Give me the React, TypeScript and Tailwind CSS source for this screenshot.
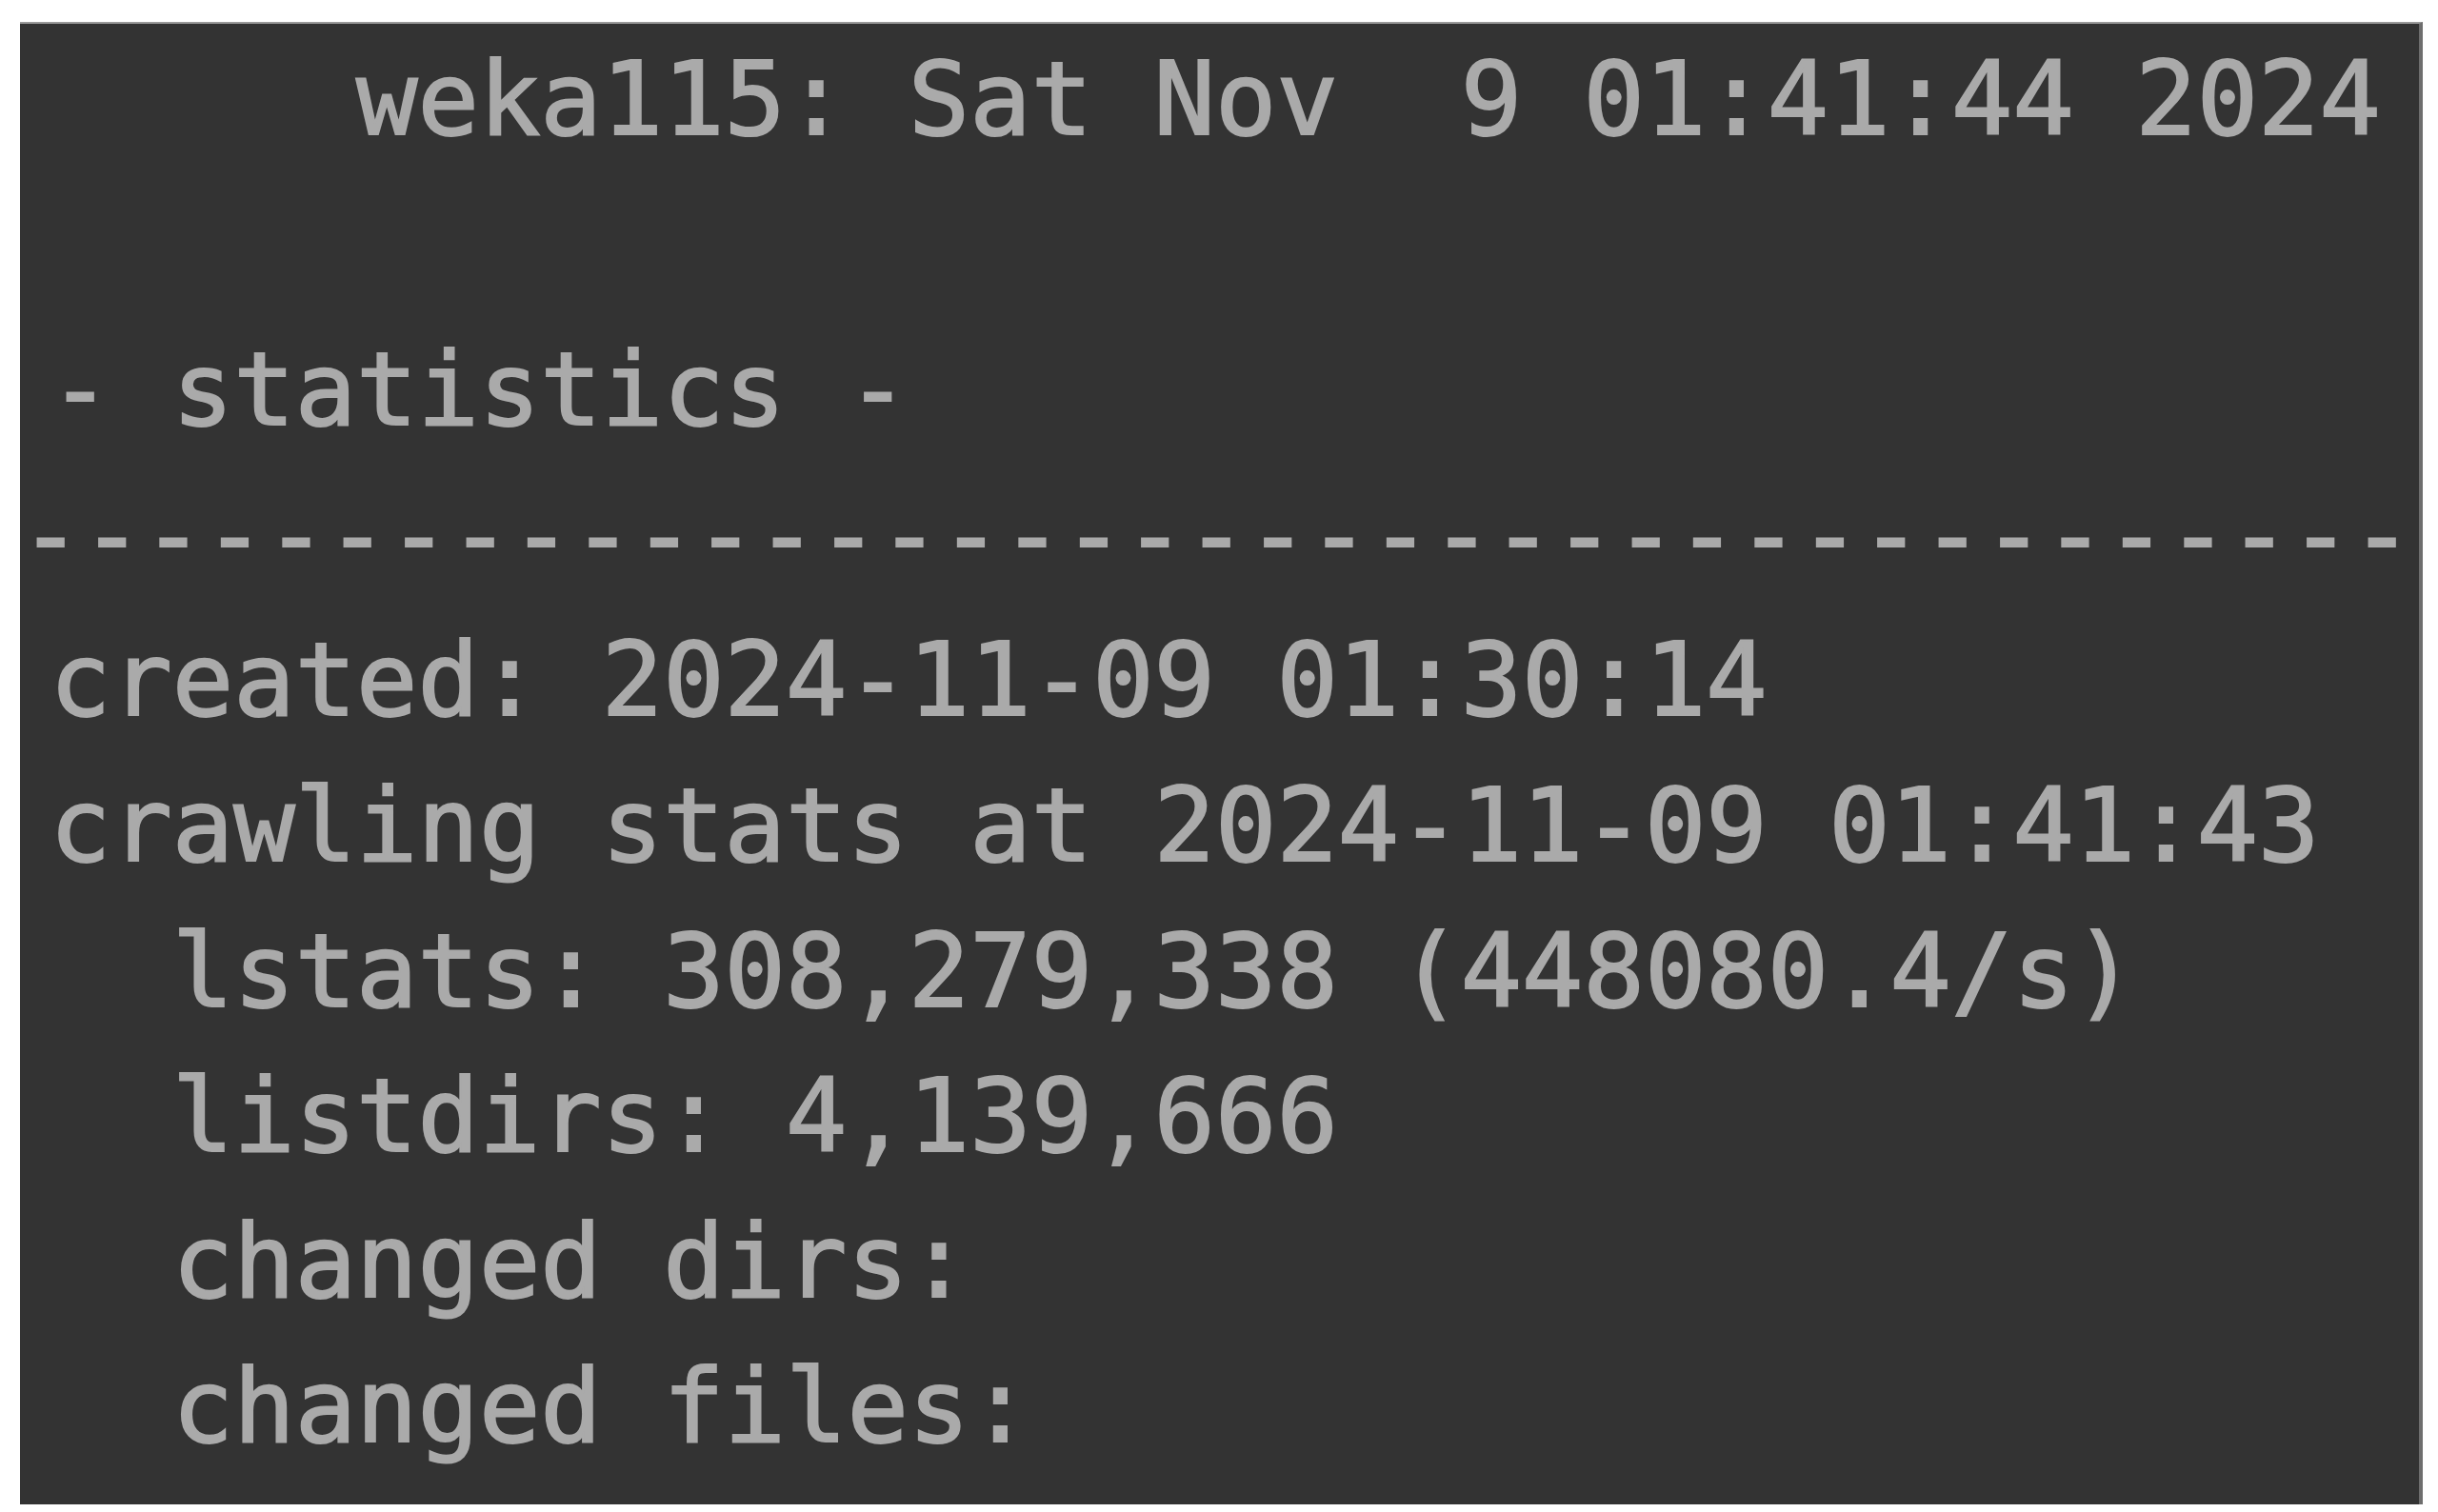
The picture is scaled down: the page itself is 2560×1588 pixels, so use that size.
const lines: string[] = [
  "     weka115: Sat Nov  9 01:41:44 2024",
  "",
  "- statistics -",
];

const stats: string[] = [
  "created: 2024-11-09 01:30:14",
  "crawling stats at 2024-11-09 01:41:43",
  "  lstats: 308,279,338 (448080.4/s)",
  "  listdirs: 4,139,666",
  "  changed dirs:",
  "  changed files:",
];

export default function App() {
  return (
    <div className="h-[1588px] w-[2560px] overflow-hidden bg-white pl-[21px] pt-[23px]">
      <div className="h-[1557px] w-[2523px] overflow-hidden border-t-2 border-r-4 border-t-[#9a9a9a] border-r-[#6e6e6e] bg-[#333333] pt-[3px] font-['DejaVu_Sans_Mono',monospace] text-[107px] leading-[152.6px] whitespace-pre text-[#aaaaaa] [-webkit-text-stroke:2px_#aaaaaa]">
        {lines.map((line, i) => (
          <div key={i} className="h-[152.6px] pl-[31px]">
            {line}
          </div>
        ))}
        <div className="h-[152.6px]">{"-".repeat(39)}</div>
        {stats.map((line, i) => (
          <div key={i} className="h-[152.6px] pl-[31px]">
            {line}
          </div>
        ))}
      </div>
    </div>
  );
}
